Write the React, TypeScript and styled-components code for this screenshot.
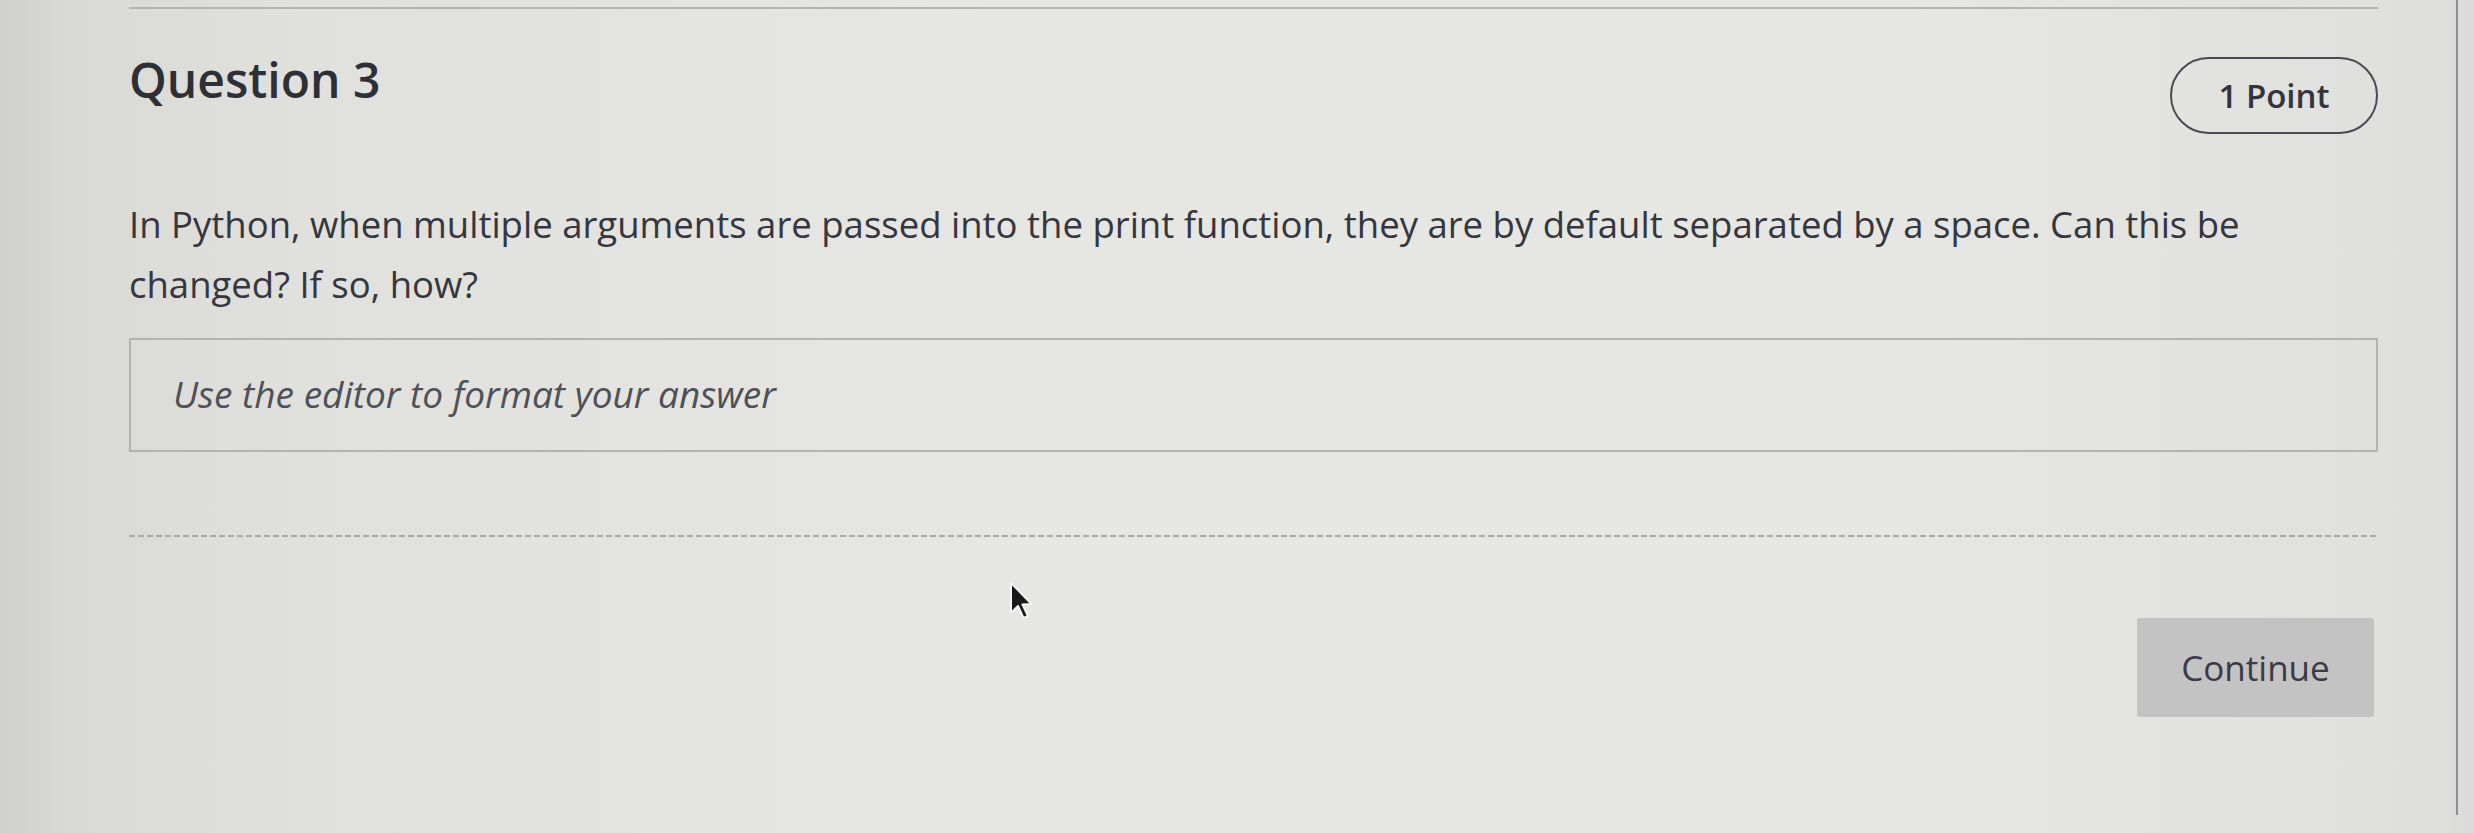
import React from 'react';
import styled, { createGlobalStyle } from 'styled-components';

const GlobalStyle = createGlobalStyle`
  html, body {
    margin: 0;
    padding: 0;
  }

  body {
    min-height: 833px;
    font-family: 'Open Sans', 'Noto Sans', sans-serif;
    color: #38383f;
    background: linear-gradient(
      90deg,
      #d0d0ce 0px,
      #d9d9d6 70px,
      #e0e0dc 300px,
      #e6e6e2 1000px,
      #e6e6e2 1900px,
      #dfdfdd 2440px,
      #dadada 2474px
    );
  }
`;

const Screen = styled('div')`
  position: relative;
  display: flex;
  height: 833px;
  overflow: hidden;
`;

const Panel = styled('main')`
  box-sizing: border-box;
  width: 2458px;
  height: 815px;
  padding: 7px 78px 0 129px;
  border-right: 2px solid #8e8e94;
  display: flex;
  flex-direction: column;
`;

const TopRule = styled('div')`
  height: 0;
  border-top: 2px solid #b4b4b6;
`;

const Header = styled('header')`
  display: flex;
  justify-content: space-between;
  align-items: flex-start;
`;

const Title = styled('h2')`
  margin: 41px 0 0;
  font-size: 48px;
  line-height: 60px;
  font-weight: 600;
  color: #2f2f36;
`;

const PointPill = styled('span')`
  box-sizing: border-box;
  margin-top: 48px;
  height: 77px;
  width: 208px;
  display: flex;
  align-items: center;
  justify-content: center;
  border: 2px solid #4a4a55;
  border-radius: 40px;
  font-size: 33px;
  font-weight: 600;
  color: #34343c;
`;

const Prompt = styled('p')`
  margin: 60px 0 0;
  font-size: 36.5px;
  line-height: 60px;
  color: #36363e;
`;

const AnswerBox = styled('div')`
  box-sizing: border-box;
  margin-top: 24px;
  height: 114px;
  padding: 32px 0 0 42px;
  border: 2px solid #b3b3b6;
`;

const Placeholder = styled('span')`
  font-size: 37px;
  line-height: 44px;
  font-style: italic;
  color: #505058;
`;

const DashedRule = styled('div')`
  margin-top: 83px;
  height: 2px;
  background-image: repeating-linear-gradient(
    90deg,
    #a9a9ac 0,
    #a9a9ac 6px,
    transparent 6px,
    transparent 9px
  );
`;

const Footer = styled('footer')`
  display: flex;
  justify-content: flex-end;
  padding-right: 4px;
  margin-top: 81px;
`;

const ContinueButton = styled('button')`
  box-sizing: border-box;
  width: 237px;
  height: 99px;
  border: none;
  border-radius: 3px;
  background: #c3c3c3;
  font-family: 'Open Sans', 'Noto Sans', sans-serif;
  font-size: 35px;
  color: #3a3a48;
`;

// Mouse pointer caught in the screenshot.
const Cursor = styled('svg')`
  position: absolute;
  left: 1008px;
  top: 581px;
  width: 26px;
  height: 42px;
`;

export default function App() {
  return (
    <>
      <GlobalStyle />
      <Screen>
        <Panel>
          <TopRule />
          <Header>
            <Title>Question 3</Title>
            <PointPill>1 Point</PointPill>
          </Header>
          <Prompt>
            In Python, when multiple arguments are passed into the print function, they are by default
            separated by a space. Can this be changed? If so, how?
          </Prompt>
          <AnswerBox>
            <Placeholder>Use the editor to format your answer</Placeholder>
          </AnswerBox>
          <DashedRule />
          <Footer>
            <ContinueButton>Continue</ContinueButton>
          </Footer>
        </Panel>
        <Cursor viewBox="0 0 26 42">
          <path
            d="M3 2 L3 32 L10 25 L15.5 37 L20 35 L14.5 23.5 L23.5 23 Z"
            fill="#1a1a1e"
            stroke="#f4f4f4"
            strokeWidth="2"
            strokeLinejoin="round"
          />
        </Cursor>
      </Screen>
    </>
  );
}
